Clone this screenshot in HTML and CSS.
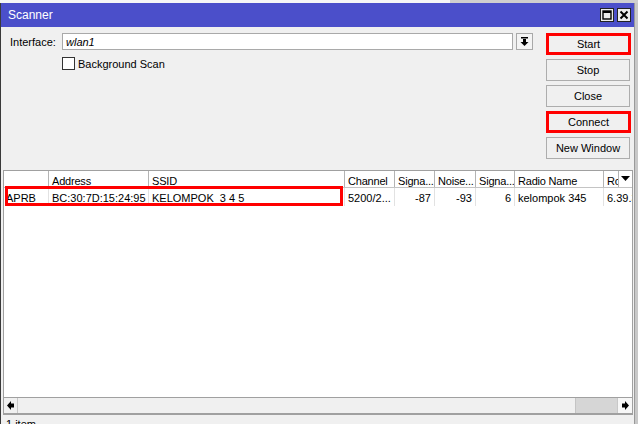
FILE: index.html
```html
<!DOCTYPE html>
<html lang="en">
<head>
    <meta charset="UTF-8">
    <title>Scanner</title>
    <link rel="stylesheet" href="styles.css">
</head>
<body>
    <div class="desk">
        <div class="desk-left"></div>
    </div>
    <div class="window">
        <div class="titlebar">
            <span class="title">Scanner</span>
            <div class="tbtns">
                <span class="tbtn">
                    <svg width="12" height="12" viewBox="0 0 12 12"><rect x="2" y="2" width="8" height="8" fill="none" stroke="#000" stroke-width="1.4"/><rect x="2" y="2" width="8" height="2" fill="#000"/></svg>
                </span>
                <span class="tbtn">
                    <svg width="12" height="12" viewBox="0 0 12 12"><path d="M2.5 2.5 L9.5 9.5 M9.5 2.5 L2.5 9.5" stroke="#000" stroke-width="2"/></svg>
                </span>
            </div>
        </div>

        <div class="top">
            <div class="form">
                <div class="field">
                    <label class="label">Interface:</label>
                    <div class="select"><span class="value">wlan1</span></div>
                    <span class="dd">
                        <svg width="9" height="9" viewBox="0 0 9 9"><rect x="1" y="0" width="7" height="1.5" fill="#000"/><rect x="3" y="2" width="3" height="3" fill="#000"/><path d="M0.5 5 L8.5 5 L4.5 9 Z" fill="#000"/></svg>
                    </span>
                </div>
                <label class="check"><span class="box"></span>Background Scan</label>
            </div>
            <div class="actions">
                <button class="btn marked">Start</button>
                <button class="btn">Stop</button>
                <button class="btn">Close</button>
                <button class="btn marked">Connect</button>
                <button class="btn">New Window</button>
            </div>
        </div>

        <div class="grid">
            <div class="list">
                <div class="row head">
                    <div class="cell"></div>
                    <div class="cell">Address</div>
                    <div class="cell">SSID</div>
                    <div class="cell">Channel</div>
                    <div class="cell">Signa...</div>
                    <div class="cell">Noise...</div>
                    <div class="cell">Signa...</div>
                    <div class="cell">Radio Name</div>
                    <div class="cell">Ro</div>
                    <div class="cell sort">
                        <svg width="9" height="6" viewBox="0 0 9 6"><path d="M0 0 L9 0 L4.5 5 Z" fill="#000"/></svg>
                    </div>
                </div>
                <div class="row data">
                    <div class="cell">APRB</div>
                    <div class="cell">BC:30:7D:15:24:95</div>
                    <div class="cell">KELOMPOK&nbsp; 3 4 5</div>
                    <div class="cell">5200/2...</div>
                    <div class="cell num">-87</div>
                    <div class="cell num">-93</div>
                    <div class="cell num">6</div>
                    <div class="cell">kelompok 345</div>
                    <div class="cell last">6.39.3</div>
                </div>
                <div class="mark"></div>
            </div>
            <div class="hscroll">
                <span class="arrow">
                    <svg width="8" height="9" viewBox="0 0 8 9"><path d="M0 4.5 L4 0 L4 2.5 L7 2.5 L7 6.5 L4 6.5 L4 9 Z" fill="#000"/></svg>
                </span>
                <span class="track"></span>
                <span class="thumb"></span>
                <span class="arrow right">
                    <svg width="8" height="9" viewBox="0 0 8 9"><path d="M8 4.5 L4 0 L4 2.5 L1 2.5 L1 6.5 L4 6.5 L4 9 Z" fill="#000"/></svg>
                </span>
            </div>
        </div>

        <div class="status">1 item</div>
    </div>
</body>
</html>
```

FILE: styles.css
```css
/* page */
body {
    margin: 0;
    width: 638px;
    height: 424px;
    overflow: hidden;
    background: #c8c8c8;
    font-family: "Liberation Sans", Arial, sans-serif;
    font-size: 11px;
    color: #000;
}

/* window behind */
.desk {
    height: 3px;
    background: #cfcfcf;
}

.desk-left {
    width: 450px;
    height: 3px;
    background: #f6f6f6;
}

/* scanner window */
.window {
    width: 633px;
    height: 421px;
    background: #f0f0f0;
    border-left: 1px solid #3a3a3a;
    border-right: 1px solid #9a9a9a;
    display: flex;
    flex-direction: column;
}

/* title bar */
.titlebar {
    height: 24px;
    flex: none;
    background: #4b4fca;
    color: #fff;
    display: flex;
    align-items: center;
    padding: 0 3px 0 7px;
    font-size: 12px;
}

.tbtns {
    margin-left: auto;
    display: flex;
    gap: 3px;
}

.tbtn {
    width: 12px;
    height: 12px;
    border: 1px solid #222;
    background: #ececec;
    display: flex;
}

/* top part */
.top {
    height: 143px;
    flex: none;
    box-sizing: border-box;
    display: flex;
    padding: 6px 4px 0 9px;
}

.form {
    flex: 1;
}

.field {
    display: flex;
    align-items: center;
}

.label {
    width: 52px;
}

.select {
    width: 451px;
    height: 17px;
    box-sizing: border-box;
    border: 1px solid #a9a9a9;
    background: #fff;
    padding: 0 3px;
    display: flex;
    align-items: center;
}

.value {
    font-style: italic;
}

.dd {
    width: 17px;
    height: 17px;
    box-sizing: border-box;
    margin-left: 3px;
    border: 1px solid #a9a9a9;
    background: #f4f4f4;
    display: flex;
    align-items: center;
    justify-content: center;
}

.check {
    display: flex;
    align-items: center;
    margin: 7px 0 0 52px;
}

.box {
    width: 13px;
    height: 13px;
    box-sizing: border-box;
    border: 1px solid #333;
    background: #fff;
    margin-right: 3px;
}

/* buttons */
.actions {
    width: 84px;
    margin-left: 12px;
    display: flex;
    flex-direction: column;
    gap: 4px;
}

.btn {
    height: 22px;
    flex: none;
    padding: 0;
    border: 1px solid #adadad;
    background: #f0f0f0;
    font-family: inherit;
    font-size: 11px;
    color: #000;
}

.marked {
    border: 3px solid #f00;
    width: 85px;
}

/* list */
.grid {
    height: 245px;
    flex: none;
    box-sizing: border-box;
    margin: 0 1px 0 2px;
    border: 1px solid #a0a0a0;
    border-bottom-width: 2px;
    display: flex;
    flex-direction: column;
}

.list {
    flex: 1;
    background: #fff;
    position: relative;
}

.row {
    display: grid;
    box-sizing: border-box;
}

.head {
    height: 17px;
    grid-template-columns: 45px 100px 196px 50px 40px 41px 39px 89px 15px 13px;
    border-bottom: 1px solid #c4c4c4;
}

.data {
    height: 18px;
    grid-template-columns: 45px 100px 196px 50px 40px 41px 39px 89px 28px;
}

.cell {
    box-sizing: border-box;
    padding: 1px 3px 0;
    display: flex;
    align-items: center;
    white-space: nowrap;
    overflow: hidden;
}

.head .cell {
    padding: 3px 2px 0 3px;
    letter-spacing: -0.2px;
    border-right: 1px solid #b4b4b4;
}

.data .cell {
    border-right: 1px solid #e2e2e2;
}

.data .cell:first-child {
    padding-left: 2px;
}

.cell.num {
    justify-content: flex-end;
}

.data .cell.last {
    border-right: none;
    padding-right: 0;
}

.head .cell.sort {
    border-right: none;
    padding: 0;
    justify-content: center;
}

.mark {
    position: absolute;
    left: 1px;
    top: 15px;
    width: 338px;
    height: 20px;
    box-sizing: border-box;
    border: 3px solid #f00;
}

/* scroll bar */
.hscroll {
    height: 15px;
    flex: none;
    border-top: 1px solid #a0a0a0;
    display: flex;
    background: #f0f0f0;
}

.arrow {
    width: 13px;
    border-right: 1px solid #c8c8c8;
    display: flex;
    align-items: center;
    justify-content: center;
}

.arrow.right {
    width: 14px;
    border-right: none;
    border-left: 1px solid #c8c8c8;
    background: #f7f7f7;
}

.track {
    flex: 1;
    background: #f0f0f0;
}

.thumb {
    width: 41px;
    background: #d6d6d6;
    border-left: 1px solid #c4c4c4;
}

/* status */
.status {
    flex: 1;
    padding: 3px 0 0 5px;
}
```
